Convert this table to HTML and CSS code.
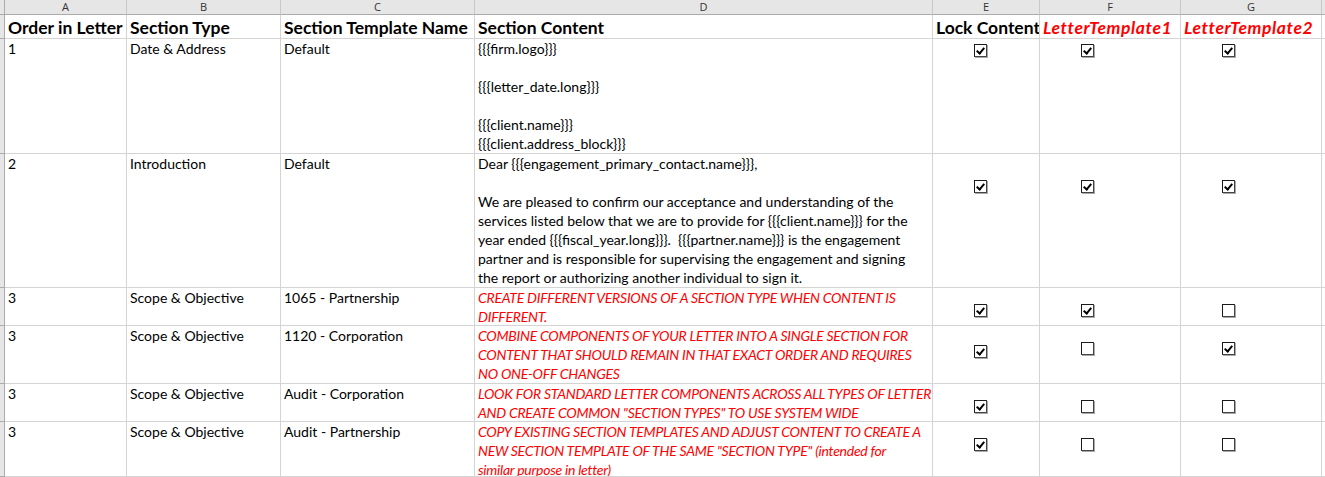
FILE: index.html
```html
<!DOCTYPE html>
<html>
<head>
<meta charset="utf-8">
<link rel="stylesheet" href="styles.css">
</head>
<body>
<div class="sheet">
  <!-- column header bar -->
  <div class="ch corner"></div>
  <div class="ch">A</div>
  <div class="ch">B</div>
  <div class="ch">C</div>
  <div class="ch">D</div>
  <div class="ch">E</div>
  <div class="ch">F</div>
  <div class="ch">G</div>
  <div class="ch tail"></div>

  <!-- header row -->
  <div class="rh"></div>
  <div class="c hd">Order in Letter</div>
  <div class="c hd">Section Type</div>
  <div class="c hd">Section Template Name</div>
  <div class="c hd">Section Content</div>
  <div class="c hd">Lock Content</div>
  <div class="c hd red">LetterTemplate1</div>
  <div class="c hd red">LetterTemplate2</div>
  <div class="c tail"></div>

  <!-- row 1 -->
  <div class="rh"></div>
  <div class="c">1</div>
  <div class="c">Date &amp; Address</div>
  <div class="c">Default</div>
  <div class="c">{{{firm.logo}}}<br><br>{{{letter_date.long}}}<br><br>{{{client.name}}}<br>{{{client.address_block}}}</div>
  <div class="c ck r1"><span class="box on"></span></div>
  <div class="c ck r1"><span class="box on"></span></div>
  <div class="c ck r1"><span class="box on"></span></div>
  <div class="c tail"></div>

  <!-- row 2 -->
  <div class="rh"></div>
  <div class="c">2</div>
  <div class="c">Introduction</div>
  <div class="c">Default</div>
  <div class="c">Dear {{{engagement_primary_contact.name}}},<br><br>We are pleased to confirm our acceptance and understanding of the<br>services listed below that we are to provide for {{{client.name}}} for the<br>year ended {{{fiscal_year.long}}}.&nbsp; {{{partner.name}}} is the engagement<br>partner and is responsible for supervising the engagement and signing<br>the report or authorizing another individual to sign it.</div>
  <div class="c ck r2"><span class="box on"></span></div>
  <div class="c ck r2"><span class="box on"></span></div>
  <div class="c ck r2"><span class="box on"></span></div>
  <div class="c tail"></div>

  <!-- row 3 -->
  <div class="rh"></div>
  <div class="c">3</div>
  <div class="c">Scope &amp; Objective</div>
  <div class="c">1065 - Partnership</div>
  <div class="c note">CREATE DIFFERENT VERSIONS OF A SECTION TYPE WHEN CONTENT IS<br>DIFFERENT.</div>
  <div class="c ck r3"><span class="box on"></span></div>
  <div class="c ck r3"><span class="box on"></span></div>
  <div class="c ck r3"><span class="box"></span></div>
  <div class="c tail"></div>

  <!-- row 4 -->
  <div class="rh"></div>
  <div class="c">3</div>
  <div class="c">Scope &amp; Objective</div>
  <div class="c">1120 - Corporation</div>
  <div class="c note">COMBINE COMPONENTS OF YOUR LETTER INTO A SINGLE SECTION FOR<br>CONTENT THAT SHOULD REMAIN IN THAT EXACT ORDER AND REQUIRES<br>NO ONE-OFF CHANGES</div>
  <div class="c ck r4a"><span class="box on"></span></div>
  <div class="c ck r4"><span class="box"></span></div>
  <div class="c ck r4"><span class="box on"></span></div>
  <div class="c tail"></div>

  <!-- row 5 -->
  <div class="rh"></div>
  <div class="c">3</div>
  <div class="c">Scope &amp; Objective</div>
  <div class="c">Audit - Corporation</div>
  <div class="c note">LOOK FOR STANDARD LETTER COMPONENTS ACROSS ALL TYPES OF LETTER<br>AND CREATE COMMON "SECTION TYPES" TO USE SYSTEM WIDE</div>
  <div class="c ck r3"><span class="box on"></span></div>
  <div class="c ck r3"><span class="box"></span></div>
  <div class="c ck r3"><span class="box"></span></div>
  <div class="c tail"></div>

  <!-- row 6 -->
  <div class="rh"></div>
  <div class="c">3</div>
  <div class="c">Scope &amp; Objective</div>
  <div class="c">Audit - Partnership</div>
  <div class="c note">COPY EXISTING SECTION TEMPLATES AND ADJUST CONTENT TO CREATE A<br>NEW SECTION TEMPLATE OF THE SAME "SECTION TYPE" (intended for<br>similar purpose in letter)</div>
  <div class="c ck r3"><span class="box on"></span></div>
  <div class="c ck r3"><span class="box"></span></div>
  <div class="c ck r3"><span class="box"></span></div>
  <div class="c tail"></div>
</div>
</body>
</html>
```

FILE: styles.css
```css
* { box-sizing: border-box; }
html, body { margin: 0; padding: 0; background: #fff; }
body { overflow: hidden; width: 1325px; height: 477px; }

.sheet {
  display: grid;
  grid-template-columns: 5px 122px 154px 194px 458px 107px 141px 141px 3px;
  grid-template-rows: 15px 24px 115px 134px 38px 58px 38px 55px;
  font-family: Lato, "Liberation Sans", sans-serif;
  font-size: 14px;
  color: #000;
}

.ch {
  background: #e6e6e6;
  border-right: 1px solid #c8c8c8;
  border-bottom: 1px solid #ababab;
  font-family: "Open Sans", "Liberation Sans", sans-serif;
  font-size: 11px;
  line-height: 14px;
  color: #333;
  text-align: center;
}
.ch.corner { border-right: 1px solid #ababab; }
.ch.tail { border-right: none; }

.rh {
  background: #e6e6e6;
  border-right: 1px solid #ababab;
  border-bottom: 1px solid #ababab;
}

.c {
  border-right: 1px solid #d4d4d4;
  border-bottom: 1px solid #d4d4d4;
  padding: 0 2px 0 3px;
  line-height: 19px;
  white-space: nowrap;
  overflow: hidden;
}
.c.tail { border-right: none; }

.hd {
  font-weight: bold;
  font-size: 17.5px;
  line-height: 25px;
}
.hd.red { color: #ff0000; font-style: italic; letter-spacing: 0.6px; }

.note { color: #ff0000; font-style: italic; letter-spacing: -0.25px; }

.ck { padding-left: 41px; }
.r1 { padding-top: 5px; }
.r2 { padding-top: 26px; }
.r3 { padding-top: 16px; }
.r4 { padding-top: 16px; }
.r4a { padding-top: 19px; }

.box {
  display: block;
  position: relative;
  width: 13px;
  height: 13px;
  border: 1px solid #1a1a1a;
  border-right-color: #444;
  border-bottom-color: #444;
  background: #fff;
  box-shadow: 1px 1px 0 #a8a8a8;
}
.box.on::after {
  content: "";
  position: absolute;
  left: 3px;
  top: 1px;
  width: 3px;
  height: 6px;
  border-right: 2px solid #000;
  border-bottom: 2px solid #000;
  transform: rotate(40deg);
}
```
